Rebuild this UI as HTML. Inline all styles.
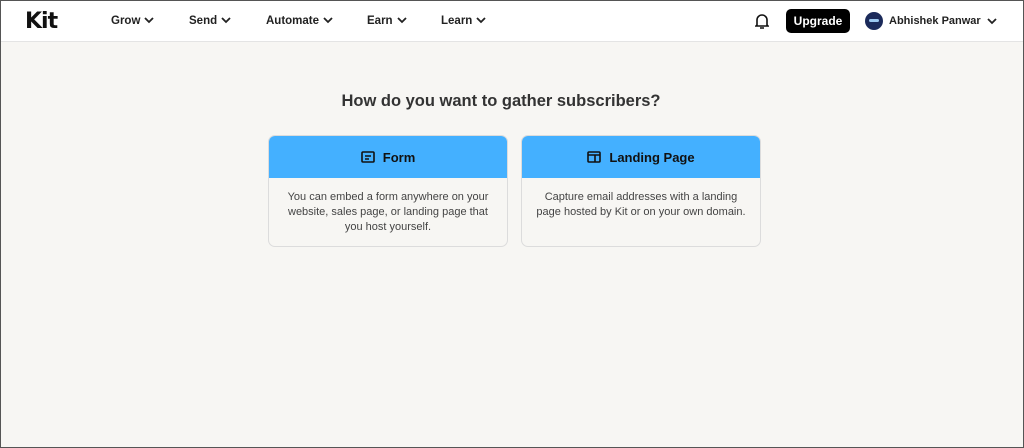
<!DOCTYPE html>
<html><head><style>
*{box-sizing:border-box;margin:0;padding:0}
body{width:1024px;height:448px;background:#f7f6f3;font-family:"Liberation Sans",sans-serif;color:#222;position:relative;overflow:hidden;border:1px solid #555}
.hdr{position:absolute;left:0;top:0;width:1022px;height:41px;background:#fff;border-bottom:1px solid #e4e4e4}
.nav{position:absolute;top:14px;font-size:11.5px;font-weight:bold;color:#222}
.nav svg{vertical-align:middle;margin-left:4px}
h1{position:absolute;top:91px;left:0;width:1000px;text-align:center;font-size:16.5px;font-weight:bold;color:#333}
.card{position:absolute;top:134px;width:240px;height:112px;border:1px solid #dcdcdc;border-radius:7px;overflow:hidden;background:#f7f6f3}
.card .t{height:42px;background:#44b0ff;display:flex;align-items:center;justify-content:center;font-size:13px;font-weight:bold;color:#111;gap:8px}
.card .d{padding:12px 14px;text-align:center;font-size:11px;line-height:15px;color:#444}
</style></head><body>
<div class="hdr">
<div style="position:absolute;left:24px;top:8px;font-size:22px;font-weight:900;letter-spacing:-1px;color:#111;font-family:'DejaVu Sans',sans-serif">Kit</div>
<div class="nav" style="left:110px">Grow<svg width="10" height="7" viewBox="0 0 10 7"><path d="M1 1l4 4 4-4" stroke="#222" stroke-width="1.8" fill="none"/></svg></div>
<div class="nav" style="left:188px">Send<svg width="10" height="7" viewBox="0 0 10 7"><path d="M1 1l4 4 4-4" stroke="#222" stroke-width="1.8" fill="none"/></svg></div>
<div class="nav" style="left:265px">Automate<svg width="10" height="7" viewBox="0 0 10 7"><path d="M1 1l4 4 4-4" stroke="#222" stroke-width="1.8" fill="none"/></svg></div>
<div class="nav" style="left:366px">Earn<svg width="10" height="7" viewBox="0 0 10 7"><path d="M1 1l4 4 4-4" stroke="#222" stroke-width="1.8" fill="none"/></svg></div>
<div class="nav" style="left:440px">Learn<svg width="10" height="7" viewBox="0 0 10 7"><path d="M1 1l4 4 4-4" stroke="#222" stroke-width="1.8" fill="none"/></svg></div>
<svg style="position:absolute;left:754px;top:11px" width="14" height="18" viewBox="0 0 14 18"><path d="M2 13V8a5 5 0 0 1 10 0v5l1 1H1z M5 16h4" stroke="#111" stroke-width="1.6" fill="none"/></svg>
<div style="position:absolute;left:785px;top:8px;width:64px;height:24px;background:#000;border-radius:5px;color:#fff;font-size:12px;font-weight:bold;text-align:center;line-height:24px">Upgrade</div>
<div style="position:absolute;left:864px;top:11px;width:18px;height:18px;border-radius:50%;background:#1b2a5a"><div style="position:absolute;left:4px;top:7px;width:10px;height:3px;background:#9cc8f0;border-radius:2px"></div></div>
<div class="nav" style="left:888px;font-size:11px">Abhishek Panwar</div>
<svg style="position:absolute;left:986px;top:17px" width="10" height="7" viewBox="0 0 10 7"><path d="M1 1l4 4 4-4" stroke="#222" stroke-width="1.8" fill="none"/></svg>
</div>
<h1>How do you want to gather subscribers?</h1>
<div class="card" style="left:267px"><div class="t"><svg width="14" height="12" viewBox="0 0 14 12"><rect x="1" y="1" width="12" height="10" rx="1" stroke="#111" stroke-width="1.6" fill="none"/><path d="M4 5h6M4 8h4" stroke="#111" stroke-width="1.4"/></svg>Form</div>
<div class="d">You can embed a form anywhere on your website, sales page, or landing page that you host yourself.</div></div>
<div class="card" style="left:520px"><div class="t"><svg width="14" height="12" viewBox="0 0 14 12"><rect x="1" y="1" width="12" height="10" rx="1" stroke="#111" stroke-width="1.6" fill="none"/><path d="M1 4h12M8 4v7" stroke="#111" stroke-width="1.6"/></svg>Landing Page</div>
<div class="d">Capture email addresses with a landing page hosted by Kit or on your own domain.</div></div>
</body></html>
